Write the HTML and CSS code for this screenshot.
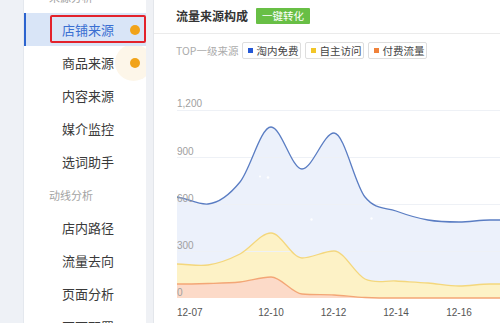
FILE: index.html
```html
<!DOCTYPE html>
<html lang="zh-CN">
<head>
<meta charset="utf-8">
<title>流量来源构成</title>
<link rel="stylesheet" href="styles.css">
</head>
<body>
<div class="page">
  <div class="leftpad"></div>
  <nav class="sidebar">
    <ul class="menu">
      <li class="group">来源分析</li>
      <li class="item active"><span>店铺来源</span><i class="dot"></i></li>
      <li class="item halo"><span>商品来源</span><i class="dot"></i></li>
      <li class="item"><span>内容来源</span></li>
      <li class="item"><span>媒介监控</span></li>
      <li class="item"><span>选词助手</span></li>
      <li class="group">动线分析</li>
      <li class="item"><span>店内路径</span></li>
      <li class="item"><span>流量去向</span></li>
      <li class="item"><span>页面分析</span></li>
      <li class="item"><span>页面配置</span></li>
    </ul>
  </nav>
  <div class="gutter"></div>
  <main class="main">
    <header class="head">
      <h1 class="title">流量来源构成</h1>
      <button class="btn">一键转化</button>
    </header>
    <div class="filters">
      <span class="flabel">TOP一级来源</span>
      <span class="tag"><i class="sq sq-blue"></i>淘内免费</span>
      <span class="tag"><i class="sq sq-yellow"></i>自主访问</span>
      <span class="tag"><i class="sq sq-orange"></i>付费流量</span>
    </div>
    <svg class="chart" width="346" height="233" viewBox="154 90 346 233" xmlns="http://www.w3.org/2000/svg">
      <path class="area-blue" d="M177,197 C187.4,198.2 197.6,205 208,204 C218.4,203 229.6,194.8 240,182 C250.4,169.2 260.6,127 271,127 C281.4,127 291.6,169 302,169 C312.4,169 323.6,133 334,133 C344.4,133 354.6,184 365,197 C375.4,210 385.6,207.2 396,211 C406.4,214.8 417.6,218.2 428,220 C438.4,221.8 448.6,222 459,222 C469.4,222 479.6,220 490,220 C500.4,220 511.6,220 522,220 L522,298 L177,298 Z"/>
      <path class="area-yellow" d="M177,264 C187.4,264 197.6,266.5 208,265 C218.4,263.5 229.6,259.3 240,254 C250.4,248.7 260.6,233 271,233 C281.4,233 291.6,258 302,258 C312.4,258 323.6,251 334,251 C344.4,251 354.6,274 365,279 C375.4,284 385.6,280.3 396,281 C406.4,281.7 417.6,282.2 428,283 C438.4,283.8 448.6,286 459,286 C469.4,286 479.6,284 490,284 C500.4,284 511.6,284 522,284 L522,298 L177,298 Z"/>
      <path class="area-orange" d="M177,284 C187.4,284 197.6,283.8 208,283.5 C218.4,283.2 229.6,283.1 240,282 C250.4,280.9 260.6,277 271,277 C281.4,277 291.6,293 302,294 C312.4,295 323.6,294.4 334,295 C344.4,295.6 354.6,297.1 365,297.5 C375.4,297.9 385.6,298 396,298 L522,298 L177,298 Z"/>
      <g class="grid">
        <line x1="177" y1="110.5" x2="500" y2="110.5"/>
        <line x1="177" y1="157.5" x2="500" y2="157.5"/>
        <line x1="177" y1="204.5" x2="500" y2="204.5"/>
        <line x1="177" y1="251.5" x2="500" y2="251.5"/>
      </g>
      <path class="line-orange" d="M177,284 C187.4,284 197.6,283.8 208,283.5 C218.4,283.2 229.6,283.1 240,282 C250.4,280.9 260.6,277 271,277 C281.4,277 291.6,293 302,294 C312.4,295 323.6,294.4 334,295 C344.4,295.6 354.6,297.1 365,297.5 C375.4,297.9 385.6,298 396,298 L522,298"/>
      <path class="line-yellow" d="M177,264 C187.4,264 197.6,266.5 208,265 C218.4,263.5 229.6,259.3 240,254 C250.4,248.7 260.6,233 271,233 C281.4,233 291.6,258 302,258 C312.4,258 323.6,251 334,251 C344.4,251 354.6,274 365,279 C375.4,284 385.6,280.3 396,281 C406.4,281.7 417.6,282.2 428,283 C438.4,283.8 448.6,286 459,286 C469.4,286 479.6,284 490,284 C500.4,284 511.6,284 522,284"/>
      <path class="line-blue" d="M177,197 C187.4,198.2 197.6,205 208,204 C218.4,203 229.6,194.8 240,182 C250.4,169.2 260.6,127 271,127 C281.4,127 291.6,169 302,169 C312.4,169 323.6,133 334,133 C344.4,133 354.6,184 365,197 C375.4,210 385.6,207.2 396,211 C406.4,214.8 417.6,218.2 428,220 C438.4,221.8 448.6,222 459,222 C469.4,222 479.6,220 490,220 C500.4,220 511.6,220 522,220"/>
      <g class="specks">
        <circle cx="260" cy="176.5" r="1.1"/>
        <circle cx="268" cy="177.5" r="1.3"/>
        <circle cx="311.5" cy="219.5" r="1.2"/>
        <circle cx="371.5" cy="218.5" r="1.2"/>
      </g>
      <g class="ylab">
        <text x="177" y="107">1,200</text>
        <text x="177" y="155">900</text>
        <text x="177" y="202">600</text>
        <text x="177" y="249">300</text>
        <text x="177" y="296">0</text>
      </g>
      <g class="xlab">
        <text class="first" x="177" y="315.5">12-07</text>
        <text x="271" y="315.5">12-10</text>
        <text x="333.5" y="315.5">12-12</text>
        <text x="396" y="315.5">12-14</text>
        <text x="459" y="315.5">12-16</text>
      </g>
    </svg>
  </main>
</div>
</body>
</html>
```

FILE: styles.css
```css
* { box-sizing: border-box; }
html, body {
  margin: 0;
  padding: 0;
  width: 500px;
  height: 323px;
  overflow: hidden;
  background: #ffffff;
  font-family: "Noto Sans CJK SC", "Noto Sans", "Liberation Sans", sans-serif;
}
.page {
  display: flex;
  width: 500px;
  height: 323px;
  overflow: hidden;
}
.leftpad {
  width: 24px;
  flex: none;
  background: #eef1f6;
  border-right: 1px solid #e4e8ee;
}
.sidebar {
  width: 122px;
  flex: none;
  background: #ffffff;
  overflow: hidden;
}
.menu {
  list-style: none;
  margin: -20px 0 0 0;
  padding: 0;
}
.menu li {
  height: 33px;
  display: flex;
  align-items: center;
  position: relative;
}
.group {
  padding-left: 25px;
  font-size: 11px;
  color: #a3a3a3;
}
.item {
  padding-left: 38px;
  font-size: 13px;
  color: #3a3a3a;
}
.item span { position: relative; z-index: 2; }
.item.active {
  background: #d9e5f7;
  color: #3a6fd2;
  z-index: 3;
}
.item.active::before {
  content: "";
  position: absolute;
  left: 0;
  top: 0;
  bottom: 0;
  width: 2px;
  background: #2c64cf;
}
.item.active::after {
  content: "";
  position: absolute;
  left: 26px;
  right: 0;
  top: 2px;
  bottom: 3px;
  border: 2px solid #e3222b;
  border-radius: 2px;
}
.dot {
  position: absolute;
  left: 106px;
  top: 50%;
  width: 10px;
  height: 10px;
  margin-top: -5px;
  border-radius: 50%;
  background: #f1a31a;
  z-index: 2;
}
.halo::before {
  content: "";
  position: absolute;
  left: 91px;
  top: -2px;
  width: 37px;
  height: 37px;
  border-radius: 50%;
  background: #fdf6e9;
  z-index: 1;
}
.gutter {
  width: 8px;
  flex: none;
  background: #eff1f5;
  border-right: 1px solid #e3e6eb;
}
.main {
  flex: 1;
  min-width: 0;
  overflow: hidden;
  display: flex;
  flex-direction: column;
}
.head {
  height: 34px;
  flex: none;
  display: flex;
  align-items: center;
  padding: 0 0 1px 22px;
  border-bottom: 1px solid #ebebeb;
}
.title {
  margin: 0;
  font-size: 12px;
  line-height: 16px;
  font-weight: 700;
  color: #333333;
}
.btn {
  margin-left: 8px;
  height: 16px;
  padding: 0 6px;
  border: 0;
  border-radius: 1px;
  background: #68bf45;
  color: #ffffff;
  font-family: inherit;
  font-size: 10.5px;
  line-height: 16px;
}
.filters {
  flex: none;
  margin-top: 8px;
  height: 17px;
  padding-left: 22px;
  display: flex;
  align-items: center;
  gap: 4px;
}
.flabel {
  font-size: 10.5px;
  color: #ababab;
}
.tag {
  height: 17px;
  display: flex;
  align-items: center;
  gap: 3px;
  padding: 0 2px 0 5px;
  border: 1px solid #dedede;
  border-radius: 2px;
  background: #ffffff;
  font-size: 10.5px;
  color: #444444;
}
.sq {
  width: 5px;
  height: 5px;
  flex: none;
}
.sq-blue { background: #2558d6; }
.sq-yellow { background: #f2c628; }
.sq-orange { background: #f0823a; }
.chart {
  display: block;
  flex: none;
  margin-top: 31px;
  width: 346px;
  height: 233px;
}
.area-blue { fill: #ecf1fb; }
.area-yellow { fill: #fdf2c6; }
.area-orange { fill: #fcdac8; }
.grid line { stroke: #eef1f6; stroke-width: 1; }
.line-blue { fill: none; stroke: #5a7dc3; stroke-width: 1.3; }
.line-yellow { fill: none; stroke: #f4d77c; stroke-width: 1.3; }
.line-orange { fill: none; stroke: #f3a676; stroke-width: 1.3; }
.specks circle { fill: #ffffff; opacity: 0.9; }
.ylab text {
  font-family: "Liberation Sans", sans-serif;
  font-size: 10px;
  fill: #a0a0a0;
}
.xlab text {
  font-family: "Liberation Sans", sans-serif;
  font-size: 10px;
  fill: #555555;
  text-anchor: middle;
}
.xlab text.first { text-anchor: start; }
```
